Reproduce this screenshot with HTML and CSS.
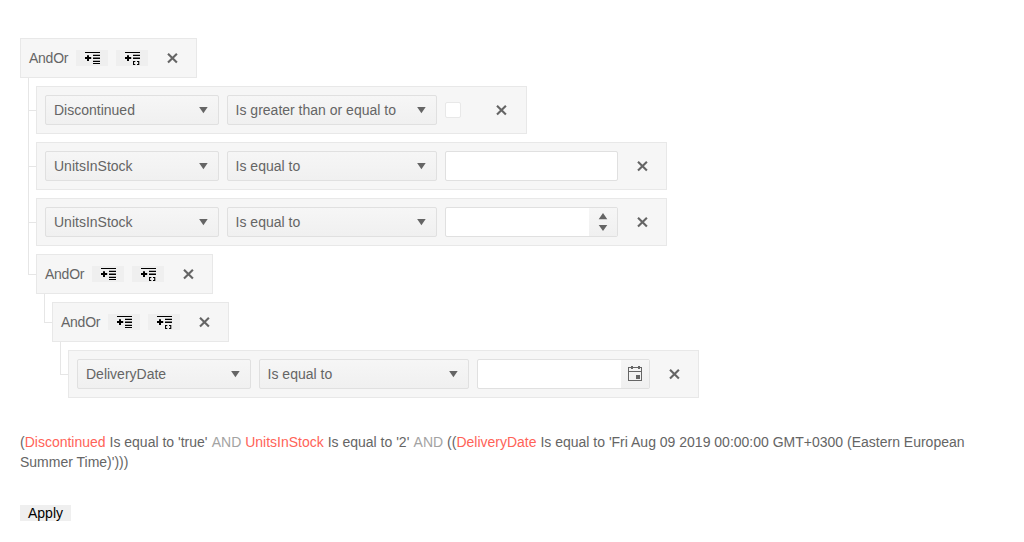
FILE: index.html
```html
<!DOCTYPE html>
<html lang="en">
<head>
<meta charset="utf-8">
<title>Filter</title>
<link rel="stylesheet" href="styles.css">
</head>
<body>
<svg class="defs" aria-hidden="true">
  <symbol id="add-expression" viewBox="0 0 16 16"><path d="M1 2h15v1.100H1zM9 4.800h7V6H9zM9 7.400h7V9H9zM9 10.800h7V12H9zM9 13h7v1.100H9zM3 5.200h2v1.900h2.200V9H5v2H3V9H1V7.100h2z"/></symbol>
  <symbol id="add-group" viewBox="0 0 16 16"><path d="M1 2h15v1.100H1zM9 4.800h7V6H9zM9 7.400h7V9H9zM3 5.200h2v1.900h2.200V9H5v2H3V9H1V7.100h2zM9 11h2.300v1.100h-1.200v1.800h1.200V15H9zM13 11h2.300v4H13v-1.100h1.200v-1.800H13z"/></symbol>
  <symbol id="close" viewBox="0 0 16 16"><path d="M4 3.700l8.900 8.900M12.900 3.700L4 12.600" fill="none" stroke="currentColor" stroke-width="2.100"/></symbol>
  <symbol id="down" viewBox="0 0 16 16"><path d="M4.100 4.900h8.600L8.400 11.200z"/></symbol>
  <symbol id="calendar" viewBox="0 0 16 16"><path d="M1 1h3V0h2v1h5V0h2v1h2v14H1zM2 2v3h12V2h-1v1h-2V2H6v1H4V2zM2 6v8h12V6zM9 9h4v4H9z" fill-rule="evenodd"/></symbol>
</svg>
<main class="page">
  <ul class="filter">
    <li class="item">
      <div class="bar group-bar"><span class="logic">AndOr</span><button class="add"><svg><use href="#add-expression"/></svg></button><button class="add"><svg><use href="#add-group"/></svg></button><button class="close"><svg><use href="#close"/></svg></button></div>
      <ul class="lines">
        <li class="item">
          <div class="bar"><div class="select field">Discontinued<svg><use href="#down"/></svg></div><div class="select operator">Is greater than or equal to<svg><use href="#down"/></svg></div><span class="check"></span><button class="close after-check"><svg><use href="#close"/></svg></button></div>
        </li>
        <li class="item">
          <div class="bar"><div class="select field">UnitsInStock<svg><use href="#down"/></svg></div><div class="select operator">Is equal to<svg><use href="#down"/></svg></div><div class="input"></div><button class="close"><svg><use href="#close"/></svg></button></div>
        </li>
        <li class="item">
          <div class="bar"><div class="select field">UnitsInStock<svg><use href="#down"/></svg></div><div class="select operator">Is equal to<svg><use href="#down"/></svg></div><div class="input"><span class="addon"><svg class="spin" viewBox="0 0 28 28"><path d="M9.700 11.200h8.600L14 5zM9.700 17h8.600L14 23z"/></svg></span></div><button class="close"><svg><use href="#close"/></svg></button></div>
        </li>
        <li class="item">
          <div class="bar group-bar"><span class="logic">AndOr</span><button class="add"><svg><use href="#add-expression"/></svg></button><button class="add"><svg><use href="#add-group"/></svg></button><button class="close"><svg><use href="#close"/></svg></button></div>
          <ul class="lines">
            <li class="item">
              <div class="bar group-bar"><span class="logic">AndOr</span><button class="add"><svg><use href="#add-expression"/></svg></button><button class="add"><svg><use href="#add-group"/></svg></button><button class="close"><svg><use href="#close"/></svg></button></div>
              <ul class="lines">
                <li class="item">
                  <div class="bar"><div class="select field">DeliveryDate<svg><use href="#down"/></svg></div><div class="select operator">Is equal to<svg><use href="#down"/></svg></div><div class="input"><span class="addon"><svg><use href="#calendar"/></svg></span></div><button class="close"><svg><use href="#close"/></svg></button></div>
                </li>
              </ul>
            </li>
          </ul>
        </li>
      </ul>
    </li>
  </ul>
  <p class="preview">(<span class="name">Discontinued</span> Is equal to 'true' <span class="op">AND</span> <span class="name">UnitsInStock</span> Is equal to '2' <span class="op">AND</span> ((<span class="name">DeliveryDate</span> Is equal to 'Fri Aug 09 2019 00:00:00 GMT+0300 (Eastern European Summer Time)')))</p>
  <button class="apply">Apply</button>
</main>
</body>
</html>
```
FILE: styles.css
```css
* { box-sizing: border-box; }
body { margin: 0; background: #fff; color: #656565; font: 14px/20px "Liberation Sans", Arial, sans-serif; }
.defs { position: absolute; width: 0; height: 0; }
.page { padding: 38px 20px 0; }
ul { list-style: none; margin: 0; padding: 0; }
svg { display: block; width: 16px; height: 16px; fill: currentColor; flex: none; }
button { border: 0; border-radius: 0; padding: 0; font: inherit; }
.bar { display: flex; align-items: center; gap: 8px; width: max-content; height: 48px; padding: 0 8px; background: #f6f6f6; border: 1px solid #e8e8e8; }
.group-bar { height: 40px; }
.logic { width: 39px; letter-spacing: -0.25px; }
.add { width: 32px; height: 16px; padding: 0 8px; background: #efefef; color: #000; }
.close { width: 32px; height: 30px; padding: 0 8px; background: transparent; color: #656565; }
.after-check { margin-left: 17px; padding: 0 9px 0 7px; }
.lines { padding-left: 16px; }
.lines > .item { position: relative; padding-top: 8px; }
.lines > .item::before { content: ""; position: absolute; left: -8px; top: 0; bottom: 0; border-left: 1px solid #e6e6e6; }
.lines > .item::after { content: ""; position: absolute; left: -8px; top: 32px; width: 8px; border-top: 1px solid #e6e6e6; }
.lines > .item:last-child::before { bottom: auto; height: 32px; }
.lines > .item:has(> .group-bar)::before { height: 28px; }
.lines > .item:has(> .group-bar)::after { top: 28px; }
.select { display: flex; align-items: center; justify-content: space-between; height: 30px; padding: 0 7px 0 8px; border: 1px solid #e0e0e0; border-radius: 2px; background: linear-gradient(#f6f6f6, #f0f0f0); }
.field { width: 174px; }
.operator { width: 210px; padding-left: 7.6px; }
.check { width: 16px; height: 16px; border: 1px solid #e8e8e8; border-radius: 2px; background: #fff; }
.input { display: flex; justify-content: flex-end; width: 173px; height: 30px; border: 1px solid #e0e0e0; border-radius: 2px; background: #fff; }
.addon { display: flex; align-items: center; justify-content: center; width: 28px; background: linear-gradient(#f6f6f6, #f0f0f0); }
.spin { width: 28px; height: 28px; }
.preview { margin: 34px 0 33px; }
.name { color: #ff6358; }
.op { margin-left: 0.4px; color: #a3a3a3; }
.apply { display: block; height: 16px; padding: 0 8px; line-height: 16px; background: #efefef; color: #000; }
```
